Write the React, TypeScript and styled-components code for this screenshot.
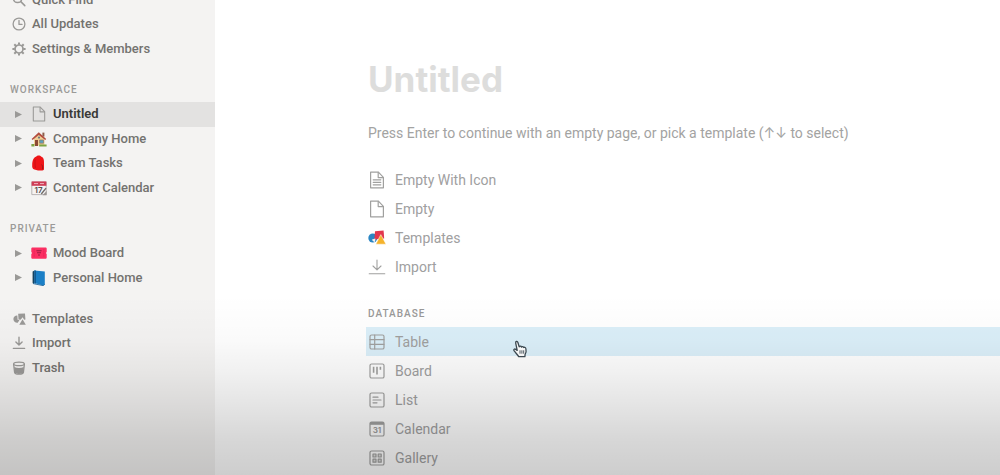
import React from "react";
import styled, { createGlobalStyle } from "styled-components";

const GlobalStyle = createGlobalStyle`
  *, *::before, *::after { box-sizing: border-box; }
  body {
    margin: 0;
    background: #ffffff;
    font-family: Roboto, Inter, "Liberation Sans", sans-serif;
  }
`;

const Page = styled.div`
  position: relative;
  display: grid;
  grid-template-columns: 215px minmax(0, 1fr);
  height: 100vh;
  overflow: hidden;
`;

const Shade = styled.div`
  position: absolute;
  inset: 62% 0 0 0;
  pointer-events: none;
  background: linear-gradient(
    to bottom,
    rgba(0, 0, 0, 0) 0%,
    rgba(0, 0, 0, 0.02) 25%,
    rgba(0, 0, 0, 0.055) 42%,
    rgba(0, 0, 0, 0.1) 60%,
    rgba(0, 0, 0, 0.155) 80%,
    rgba(0, 0, 0, 0.195) 100%
  );
`;

const Sidebar = styled.nav`
  display: flex;
  flex-direction: column;
  gap: 17px;
  background: #f4f3f2;
  min-width: 0;
`;

const Section = styled.section<{ $scrolled?: boolean }>`
  margin-top: ${(p) => (p.$scrolled ? "-12px" : "0")};
`;

const SectionTitle = styled.h2`
  margin: 0;
  padding-left: 10px;
  font-size: 10px;
  line-height: 24px;
  font-weight: 500;
  letter-spacing: 1px;
  color: #9b9a98;
`;

const LinkList = styled.div<{ $height: number }>`
  display: grid;
  grid-auto-rows: 1fr;
  height: ${(p) => p.$height}px;
`;

const NavLink = styled.a<{ $nested?: boolean; $active?: boolean }>`
  display: flex;
  align-items: center;
  gap: 6px;
  padding-left: ${(p) => (p.$nested ? "14px" : "12px")};
  font-size: 13px;
  line-height: 24px;
  font-weight: ${(p) => (p.$active ? 600 : 500)};
  color: ${(p) => (p.$active ? "#3a3937" : "#73726f")};
  background: ${(p) => (p.$active ? "#e3e2e1" : "transparent")};
  text-decoration: none;
  white-space: nowrap;

  svg { flex: none; color: #9a9997; }
`;

const Triangle = styled.svg`
  margin-right: 2px;
`;

const Main = styled.main`
  padding: 57px 0 0 151px;
  min-width: 0;
`;

const Title = styled.h1`
  margin: 0;
  padding-left: 2px;
  font-family: Inter, "Liberation Sans", sans-serif;
  font-size: 35px;
  line-height: 44px;
  font-weight: 700;
  color: #dddddc;
`;

const Hint = styled.p`
  margin: 20px 0;
  padding-left: 2px;
  font-size: 14px;
  line-height: 24px;
  color: #a3a3a2;
  white-space: nowrap;
`;

const OptionTitle = styled.h2`
  margin: 22px 0 2px;
  padding-left: 2px;
  font-size: 10px;
  line-height: 22px;
  font-weight: 500;
  letter-spacing: 1px;
  color: #999998;
`;

const Options = styled.div`
  display: flex;
  flex-direction: column;
`;

const Option = styled.button<{ $hover?: boolean }>`
  position: relative;
  display: flex;
  align-items: center;
  gap: 9px;
  width: 100%;
  height: 29px;
  border: 0;
  padding: 0 0 0 2px;
  background: ${(p) => (p.$hover ? "#dbeff9" : "transparent")};
  font-family: inherit;
  font-size: 14px;
  line-height: 20px;
  text-align: left;
  color: #a0a09f;
  cursor: pointer;

  svg { flex: none; }
`;

const Pointer = styled.svg`
  position: absolute;
  left: 146px;
  top: 13px;
`;

const line = {
  fill: "none",
  stroke: "currentColor",
  strokeLinecap: "round" as const,
  strokeLinejoin: "round" as const,
};

const SearchIcon = () => (
  <svg width="14" height="14" viewBox="0 0 14 14" {...line} strokeWidth="1.5">
    <circle cx="5.6" cy="5.4" r="4.2" />
    <path d="M8.8 8.6 12.8 12.6" />
  </svg>
);

const ClockIcon = () => (
  <svg width="14" height="14" viewBox="0 0 14 14" {...line} strokeWidth="1.3">
    <circle cx="7" cy="7" r="5.9" />
    <path d="M7 3.5V7.4H10" />
  </svg>
);

const GearIcon = () => (
  <svg width="14" height="14" viewBox="0 0 14 14" {...line} strokeWidth="1.7">
    <circle cx="7" cy="7" r="4" />
    <path
      strokeWidth="2"
      strokeLinecap="butt"
      d="M7 2.8V.4M7 13.6v-2.4M2.8 7H.4M13.6 7h-2.400M4 4 2.300 2.300M11.700 11.700 10 10M4 10l-1.700 1.700M11.700 2.300 10 4"
    />
  </svg>
);

const ShapesIcon = () => (
  <svg width="14" height="14" viewBox="0 0 15 14" fill="currentColor">
    <path d="M5.7 3.2A3.9 3.9 0 1 0 6.2 10.9L8 8.2 6 7.8z" />
    <path d="M6.6 1.4 13.9 1l.5 6.6-1.4.2-1.6-2.6-2.2 2.7-2.2-.3z" />
    <path d="M11.3 7.2 14.8 13.2H7.8z" />
  </svg>
);

const ImportIcon = () => (
  <svg width="14" height="14" viewBox="0 0 14 14" {...line} strokeWidth="1.4">
    <path d="M7 1.2v7.6M3.9 6 7 9l3.1-3M1.4 12.4h11.2" />
  </svg>
);

const TrashIcon = () => (
  <svg width="14" height="14" viewBox="0 0 14 14">
    <path
      d="M1.6 3 2.6 11.4C2.8 12.8 4 13.2 7 13.2s4.2-.4 4.4-1.8l1-8.4"
      fill="none"
      stroke="currentColor"
      strokeWidth="1.3"
    />
    <path d="M2.2 6c2.8 1.2 6.8 1.2 9.6 0L11.2 11.6C10.9 12.8 9 13 7 13s-3.9-.2-4.2-1.4z" fill="currentColor" />
    <ellipse cx="7" cy="2.9" rx="5.4" ry="1.8" fill="none" stroke="currentColor" strokeWidth="1.3" />
  </svg>
);

const PageIcon = ({ size, lines }: { size: number; lines?: boolean }) => (
  <svg width={size} height={size} viewBox="0 0 18 18" {...line} strokeWidth="1.2">
    <path d="M2.6 1.2h7.8L15.4 6.4V16.8H2.6z" />
    <path d="M10.2 1.4V6.6h5" />
    {lines && <path d="M5.2 8.8h7.6M5.2 11.3h7.6M5.2 13.8h7.6" />}
  </svg>
);

const HouseEmoji = () => (
  <svg width="16" height="16" viewBox="0 0 16 16">
    <path d="M3 7.4 8.2 3l5.2 4.4v7.2H3z" fill="#f0cf96" />
    <path d="M11.4 1.6h2v4h-2z" fill="#8d5f4c" />
    <path d="M.6 7.9 7.8 1.2l7.4 6.7-1 1.1L7.8 3.9 1.6 9z" fill="#b34d3f" />
    <path d="M4 9h3v6H4z" fill="#8c4a35" />
    <path d="M8.6 9h4v3.2h-4z" fill="#57a0bf" stroke="#9c7658" strokeWidth=".7" />
    <circle cx="8" cy="6.6" r="1.1" fill="#6d7a80" />
    <path d="M.4 13h3v2.4h-3zM8.2 13.4h7.4v2H8.2z" fill="#7da343" />
  </svg>
);

const BackpackEmoji = () => (
  <svg width="16" height="16" viewBox="0 0 16 16">
    <path
      d="M5.4 1.6C6 .2 9.400.2 10 1.600c2.400.8 3 2.800 3 5.400v7c0 1-.6 1.400-1.600 1.400H7L3.400 14.400C1.600 14.200 1 12.800 1.200 9.800 1.300 6.600 2 2.600 5.400 1.600z"
      fill="#ee1518"
    />
    <path d="M4.2 4.5C3.8 7 4 9.4 4.4 13" fill="none" stroke="#c20f14" strokeWidth=".8" />
    <path d="M10.6 9.6c1.2 1.2 1.3 3 .8 4.8" fill="none" stroke="#8f1a18" strokeWidth=".9" />
  </svg>
);

const CalendarEmoji = () => (
  <svg width="16" height="16" viewBox="0 0 16 16">
    <path d="M.8 2.2h14.4v12.4H.8z" fill="#f6f3f2" stroke="#aaa5a5" strokeWidth=".8" />
    <path d="M.6 1.4h14.8v4.4H.6z" fill="#cf3c55" />
    <path d="M3 3.6h4M9 3.6h4" stroke="#f0b4bd" strokeWidth="1" />
    <text x="3.6" y="13.4" fontSize="8" fontWeight="600" fill="#55504f" fontFamily="Inter, sans-serif">17</text>
    <path d="M10.3 14 15 8.2" stroke="#6c6867" strokeWidth="1.3" />
    <path d="M11.6 15.2h4V11z" fill="#9a9594" />
  </svg>
);

const TicketEmoji = () => (
  <svg width="16" height="16" viewBox="0 0 16 16">
    <path
      d="M1.6 2.4h12.8c.8 0 1.3.4 1.3 1.2v3.600a.8.8 0 0 0 0 1.600v3.600c0 .8-.5 1.300-1.300 1.300H1.600c-.8 0-1.300-.5-1.300-1.300V8.800a.8.8 0 0 0 0-1.600V3.600c0-.8.5-1.200 1.300-1.200z"
      fill="#fb2f63"
    />
    <path d="M5.4 5.8h5.2M6 7.8h4M7 10h2" stroke="#9c1f43" strokeWidth="1.1" />
    <path d="M3.2 4.4v7.4M12.8 4.4v7.4" stroke="#e0184c" strokeWidth=".8" strokeDasharray="1 1" />
  </svg>
);

const BookEmoji = () => (
  <svg width="16" height="16" viewBox="0 0 16 16">
    <path d="M1.6 1.4 3.6.4v13.2l-1.4.4-.6-1.2z" fill="#17425f" />
    <path d="M2.2 13.8 3.8 12.6 12.4 14.4V15.7z" fill="#b9d9ea" />
    <path d="M3.4.4 13.8 1.6V14.2L12.4 15.4 3.4 13z" fill="#1b7fc6" />
    <path d="M3.4.4 5 .6v12.8L3.4 13z" fill="#125a92" />
    <path d="M2.2 13.6 12.4 15.7l1.4-1.5" fill="none" stroke="#145e98" strokeWidth=".8" />
  </svg>
);

const ColorShapesIcon = () => (
  <svg width="18" height="18" viewBox="0 0 18 18">
    <circle cx="4.8" cy="9" r="4.5" fill="#2a86c4" />
    <path d="M7 2.2 15.6 1.4 16.2 9.6 6.4 10.4z" fill="#e2374e" />
    <path d="M4 10.6 7.4 9.4 7 13C5.8 12.8 4.4 12 4 10.6z" fill="#f6f0ec" />
    <path d="M12.8 5.6 18 15.2H7.8z" fill="#f5b32c" stroke="#ffffff" strokeWidth=".5" />
  </svg>
);

const BigImportIcon = () => (
  <svg width="18" height="18" viewBox="0 0 18 18" {...line} strokeWidth="1.1">
    <path d="M9 2v9.600M5 8l4 3.800L13 8M1.200 15.800h15.600" />
  </svg>
);

const Frame = ({ children }: { children: React.ReactNode }) => (
  <svg width="18" height="18" viewBox="0 0 18 18" {...line} strokeWidth="1.2">
    <rect x="2" y="2" width="14" height="14" rx="1.6" />
    {children}
  </svg>
);

const TableIcon = () => (
  <Frame>
    <path d="M2 6.7h14M2 11.3h14M6.7 2v14" />
  </Frame>
);

const BoardIcon = () => (
  <Frame>
    <path d="M5.6 4.8v6M9 4.8v7.6M12.4 4.8v3" strokeWidth="1.6" strokeLinecap="butt" />
  </Frame>
);

const ListIcon = () => (
  <Frame>
    <path d="M5 6.2h5M5 9h8M5 11.8h4" />
  </Frame>
);

const CalendarIcon = () => (
  <Frame>
    <path d="M2 3.4h14" strokeWidth="2.8" strokeLinecap="butt" />
    <text x="9" y="13.2" textAnchor="middle" fontSize="8" fontWeight="700" fill="currentColor" stroke="none" fontFamily="Inter, sans-serif">31</text>
  </Frame>
);

const GalleryIcon = () => (
  <Frame>
    <path d="M5 5h3v3H5zM10.2 5h3v3h-3zM5 10.2h3v3H5zM10.2 10.2h3v3h-3z" fill="currentColor" fillOpacity=".35" />
  </Frame>
);

const HandPointer = () => (
  <Pointer width="16" height="18" viewBox="0 0 16 18" aria-hidden="true">
    <path
      d="M5.2 10.4 3.7 3.2C3.3 1.3 5.4.8 5.9 2.5L7.2 6.9C7.5 5.8 9.2 5.8 9.5 7 10.2 6.2 11.4 6.5 11.7 7.5c1-.6 2 .1 2.2 1.2.5 2.3.3 4-.8 5.6l-.2 2.3H6.7C5.6 14.6 3.4 12.7 2 10.7c-.8-1.3.7-2.3 1.8-1.3z"
      fill="#ffffff"
      stroke="#3d4a52"
      strokeWidth="1.3"
      strokeLinejoin="round"
    />
    <path d="M8 10.3v3.4M9.9 10.3v3.4M11.7 10.3v3.4" stroke="#3d4a52" strokeWidth=".9" />
  </Pointer>
);

const Disclosure = () => (
  <Triangle width="9" height="9" viewBox="0 0 9 9">
    <path d="M1 1 8 4.5 1 8z" fill="currentColor" />
  </Triangle>
);

interface Entry {
  label: string;
  icon: React.ReactNode;
  active?: boolean;
}

const topLinks: Entry[] = [
  { label: "Quick Find", icon: <SearchIcon /> },
  { label: "All Updates", icon: <ClockIcon /> },
  { label: "Settings & Members", icon: <GearIcon /> },
];

const workspace: Entry[] = [
  { label: "Untitled", icon: <PageIcon size={16} />, active: true },
  { label: "Company Home", icon: <HouseEmoji /> },
  { label: "Team Tasks", icon: <BackpackEmoji /> },
  { label: "Content Calendar", icon: <CalendarEmoji /> },
];

const personal: Entry[] = [
  { label: "Mood Board", icon: <TicketEmoji /> },
  { label: "Personal Home", icon: <BookEmoji /> },
];

const bottomLinks: Entry[] = [
  { label: "Templates", icon: <ShapesIcon /> },
  { label: "Import", icon: <ImportIcon /> },
  { label: "Trash", icon: <TrashIcon /> },
];

const starters: Entry[] = [
  { label: "Empty With Icon", icon: <PageIcon size={18} lines /> },
  { label: "Empty", icon: <PageIcon size={18} /> },
  { label: "Templates", icon: <ColorShapesIcon /> },
  { label: "Import", icon: <BigImportIcon /> },
];

const databases: Entry[] = [
  { label: "Table", icon: <TableIcon />, active: true },
  { label: "Board", icon: <BoardIcon /> },
  { label: "List", icon: <ListIcon /> },
  { label: "Calendar", icon: <CalendarIcon /> },
  { label: "Gallery", icon: <GalleryIcon /> },
];

const Links = ({ items, height, nested }: { items: Entry[]; height: number; nested?: boolean }) => (
  <LinkList $height={height}>
    {items.map((item) => (
      <NavLink key={item.label} href="#" $nested={nested} $active={item.active}>
        {nested && <Disclosure />}
        {item.icon}
        {item.label}
      </NavLink>
    ))}
  </LinkList>
);

const OptionList = ({ items }: { items: Entry[] }) => (
  <Options>
    {items.map((item) => (
      <Option key={item.label} type="button" $hover={item.active}>
        {item.icon}
        {item.label}
        {item.active && <HandPointer />}
      </Option>
    ))}
  </Options>
);

export default function App() {
  return (
    <>
      <GlobalStyle />
      <Page>
        <Sidebar>
          <Section $scrolled>
            <Links items={topLinks} height={73} />
          </Section>
          <Section>
            <SectionTitle>WORKSPACE</SectionTitle>
            <Links items={workspace} height={98} nested />
          </Section>
          <Section>
            <SectionTitle>PRIVATE</SectionTitle>
            <Links items={personal} height={49} nested />
          </Section>
          <Section>
            <Links items={bottomLinks} height={73} />
          </Section>
        </Sidebar>
        <Main>
          <Title>Untitled</Title>
          <Hint>Press Enter to continue with an empty page, or pick a template (↑↓ to select)</Hint>
          <OptionList items={starters} />
          <OptionTitle>DATABASE</OptionTitle>
          <OptionList items={databases} />
        </Main>
        <Shade />
      </Page>
    </>
  );
}
